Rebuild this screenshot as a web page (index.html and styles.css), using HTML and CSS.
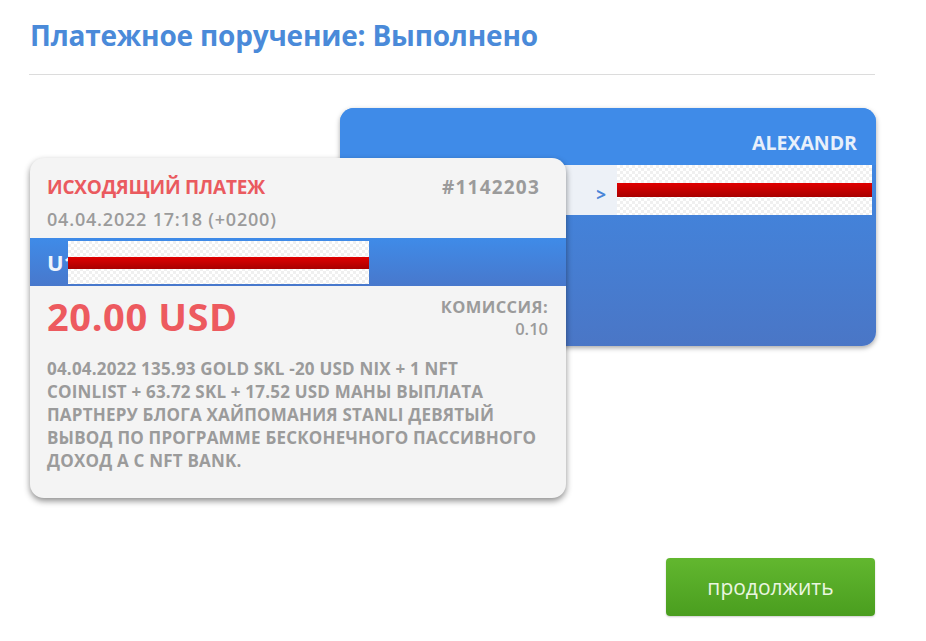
FILE: index.html
```html
<!DOCTYPE html>
<html lang="ru">
<head>
    <meta charset="UTF-8">
    <title>Платежное поручение</title>
    <link rel="stylesheet" href="styles.css">
</head>
<body>
    <div class="page">
        <h1 class="title">Платежное поручение: Выполнено</h1>
        <div class="cards">
            <div class="card-back">
                <div class="back-head">ALEXANDR</div>
                <div class="back-row">
                    <span class="arrow">&gt;</span>
                    <span class="redact redact-wide"><span class="redact-bar"></span></span>
                </div>
                <div class="back-body"></div>
            </div>
            <div class="card-front">
                <div class="front-head">
                    <div class="head-line">
                        <span class="kind">ИСХОДЯЩИЙ ПЛАТЕЖ</span>
                        <span class="number">#1142203</span>
                    </div>
                    <div class="date">04.04.2022 17:18 (+0200)</div>
                </div>
                <div class="front-band">
                    <span class="account">U1</span>
                    <span class="redact redact-band"><span class="redact-bar"></span></span>
                </div>
                <div class="front-body">
                    <div class="amount-line">
                        <span class="amount">20.00 USD</span>
                        <div class="fee">
                            <div class="fee-label">КОМИССИЯ:</div>
                            <div class="fee-value">0.10</div>
                        </div>
                    </div>
                    <p class="memo">04.04.2022 135.93 GOLD SKL -20 USD NIX + 1 NFT<br>COINLIST + 63.72 SKL + 17.52 USD МАНЫ ВЫПЛАТА<br>ПАРТНЕРУ БЛОГА ХАЙПОМАНИЯ STANLI ДЕВЯТЫЙ<br>ВЫВОД ПО ПРОГРАММЕ БЕСКОНЕЧНОГО ПАССИВНОГО<br>ДОХОД А С NFT BANK.</p>
                </div>
            </div>
        </div>
        <div class="actions">
            <button class="continue-btn">продолжить</button>
        </div>
    </div>
</body>
</html>
```

FILE: styles.css
```css
* {
    box-sizing: border-box;
    margin: 0;
    padding: 0;
}
body {
    font-family: "Open Sans", "Noto Sans", sans-serif;
    background: #ffffff;
    width: 926px;
    height: 641px;
    overflow: hidden;
}
.page {
    width: 846px;
    margin-left: 29px;
    padding-top: 18px;
}
.title {
    font-size: 28px;
    line-height: 34px;
    font-weight: 700;
    color: #4a8ad9;
    letter-spacing: -0.2px;
    padding-left: 1px;
    padding-bottom: 22px;
    border-bottom: 1px solid #dcdcdc;
}
.cards {
    display: grid;
    grid-template-columns: 1px 310px 226px 310px;
    grid-template-rows: 50px 188px auto;
    margin-top: 33px;
}
.card-back {
    grid-column: 3 / 5;
    grid-row: 1 / 3;
    border-radius: 14px;
    background: linear-gradient(#3e8ce9, #4a76c6);
    box-shadow: 0 2px 5px rgba(0, 0, 0, 0.35);
    overflow: hidden;
    display: flex;
    flex-direction: column;
}
.back-head {
    height: 57px;
    padding: 23px 19px 0 0;
    text-align: right;
    color: #e8f0fb;
    font-weight: 700;
    font-size: 19.5px;
    line-height: 24px;
    background: #3f8be8;
}
.back-row {
    height: 50px;
    margin-right: 4px;
    background: #edf1f7;
    display: flex;
    align-items: center;
    justify-content: flex-end;
}
.arrow {
    color: #4a85d8;
    font-weight: 700;
    font-size: 17px;
    margin-right: 11px;
    margin-top: 8px;
}
.back-body {
    flex: 1;
}
.card-front {
    grid-column: 1 / 4;
    grid-row: 2 / 4;
    margin-left: 1px;
    z-index: 1;
    background: #f4f4f4;
    border-radius: 14px;
    box-shadow: 0 3px 6px rgba(0, 0, 0, 0.45);
    overflow: hidden;
}
.front-head {
    height: 80px;
    padding: 17px 26px 0 17px;
}
.head-line {
    display: flex;
    justify-content: space-between;
    line-height: 24px;
}
.kind {
    color: #ea5a5f;
    font-weight: 700;
    font-size: 19px;
    letter-spacing: -0.2px;
}
.number {
    color: #9b9b9b;
    font-weight: 700;
    font-size: 19px;
    letter-spacing: 1.2px;
}
.date {
    color: #9b9b9b;
    font-weight: 600;
    font-size: 18px;
    line-height: 24px;
    letter-spacing: 0.8px;
    margin-top: 8px;
}
.front-band {
    height: 48px;
    background: linear-gradient(#3f8be8, #4878cc);
    display: flex;
    align-items: center;
    padding-left: 17px;
}
.account {
    color: #eef4fc;
    font-weight: 700;
    font-size: 22px;
}
.redact {
    display: flex;
    align-items: center;
    background-color: #ffffff;
    background-image: repeating-conic-gradient(#f0f0f0 0 25%, #ffffff 0 50%);
    background-size: 6px 6px;
}
.redact-wide {
    width: 255px;
    height: 50px;
}
.redact-band {
    width: 301px;
    height: 43px;
    margin-left: -8px;
    margin-top: 1px;
}
.redact-bar {
    display: block;
    width: 100%;
    height: 14px;
    background: linear-gradient(#e00000, #a80000);
}
.redact-band .redact-bar {
    height: 12px;
    margin-top: 1px;
}
.front-body {
    padding: 8px 18px 26px 17px;
}
.amount-line {
    display: flex;
    justify-content: space-between;
    align-items: flex-start;
}
.amount {
    color: #ed5a5f;
    font-weight: 700;
    font-size: 38px;
    line-height: 44px;
    letter-spacing: 0.6px;
}
.fee {
    color: #9b9b9b;
    font-size: 16.5px;
    text-align: right;
    line-height: 21px;
    margin-top: 2px;
}
.fee-label {
    font-weight: 700;
    letter-spacing: 0.4px;
}
.fee-value {
    font-weight: 600;
    margin-top: 1px;
}
.memo {
    color: #9b9b9b;
    font-weight: 700;
    font-size: 17px;
    line-height: 23px;
    letter-spacing: 0.2px;
    margin-top: 18px;
}
.actions {
    display: flex;
    justify-content: flex-end;
    margin-top: 60px;
}
.continue-btn {
    width: 209px;
    height: 58px;
    border: none;
    border-radius: 4px;
    background: linear-gradient(#62b72f, #4a9e1f);
    color: #eaf6e0;
    font-family: "Open Sans", "Noto Sans", sans-serif;
    font-size: 21px;
    box-shadow: 0 1px 2px rgba(0, 0, 0, 0.2);
    cursor: pointer;
}
```
